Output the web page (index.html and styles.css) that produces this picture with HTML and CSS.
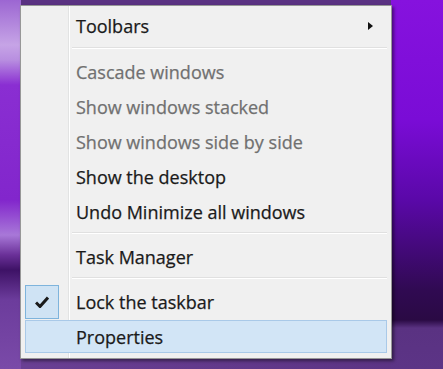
FILE: index.html
```html
<!DOCTYPE html>
<html lang="en">
<head>
  <meta charset="UTF-8">
  <title>Taskbar context menu</title>
  <link rel="stylesheet" href="styles.css">
</head>
<body>

  <!-- Taskbar right-click menu -->
  <div class="menu">
    <div class="item">
      <span class="label">Toolbars</span>
      <span class="arrow"></span>
    </div>

    <div class="sep sep-first"></div>

    <div class="item disabled"><span class="label">Cascade windows</span></div>
    <div class="item disabled"><span class="label">Show windows stacked</span></div>
    <div class="item disabled"><span class="label">Show windows side by side</span></div>
    <div class="item"><span class="label">Show the desktop</span></div>
    <div class="item"><span class="label">Undo Minimize all windows</span></div>

    <div class="sep"></div>

    <div class="item"><span class="label">Task Manager</span></div>

    <div class="sep"></div>

    <div class="item checked">
      <span class="check">
        <svg width="14" height="12" viewBox="0 0 14 12">
          <path d="M1 6.5 L5 10.5 L13 1.5" fill="none" stroke="#1a1a1a" stroke-width="3" stroke-linejoin="miter"/>
        </svg>
      </span>
      <span class="label">Lock the taskbar</span>
    </div>
    <div class="item hover"><span class="label">Properties</span></div>
  </div>

</body>
</html>
```

FILE: styles.css
```css
/* Desktop background */
body {
  margin: 0;
  padding: 5px 0 0 20px;
  height: 369px;
  box-sizing: border-box;
  overflow: hidden;
  font-family: 'Open Sans', 'Noto Sans', sans-serif;
  background:
    linear-gradient(to bottom, #9c66d2 0px, #c6a4e6 45px, #b88ee0 60px, #8a2ed2 85px, #8226cc 200px, #a878d8 235px, #6a3098 255px, #3e1266 270px, #6c3c9c 300px, #7a4aa8 369px) left top / 21px 100% no-repeat,
    linear-gradient(to bottom, #8612de 0px, #7a0cd6 120px, #5a08a8 200px, #300a52 290px, #2a0a44 320px, #5a3282 328px, #5c3486 369px) right top / 52px 100% no-repeat,
    linear-gradient(to right, #6a4094, #5a3282) left bottom / 100% 12px no-repeat,
    #5a3282;
}

/* Menu box */
.menu {
  width: 372px;
  height: 354px;
  box-sizing: border-box;
  padding: 2px 4px 0 4px;
  background:
    linear-gradient(to right, transparent 47px, #e2e3e3 47px, #e2e3e3 48px, #fff 48px, #fff 49px, transparent 49px) left top / 100% 100% no-repeat,
    #f0f0f0;
  border: 1px solid #979797;
  box-shadow: 2px 2px 3px rgba(0, 0, 0, 0.45);
}

.item {
  position: relative;
  display: flex;
  align-items: center;
  height: 35px;
  padding-left: 51px;
  padding-right: 14px;
  box-sizing: border-box;
  font-size: 18px;
  color: #1a1a1a;
  -webkit-text-stroke: 0.25px currentColor;
}
.item.disabled {
  color: #707070;
}
.label {
  flex: 1;
}

/* Submenu arrow */
.arrow {
  width: 0;
  height: 0;
  border-top: 4.5px solid transparent;
  border-bottom: 4.5px solid transparent;
  border-left: 5px solid #111;
}

/* Separators */
.sep {
  height: 10px;
  margin-left: 47px;
  background: linear-gradient(to bottom, transparent 3px, #e0e0e0 3px, #e0e0e0 4px, #fff 4px, #fff 5px, transparent 5px);
}
.sep-first {
  height: 11px;
  background: linear-gradient(to bottom, transparent 4px, #e0e0e0 4px, #e0e0e0 5px, #fff 5px, #fff 6px, transparent 6px);
}

/* Checked item */
.check {
  position: absolute;
  left: 0;
  top: 1px;
  width: 34px;
  height: 34px;
  box-sizing: border-box;
  display: flex;
  align-items: center;
  justify-content: center;
  background: #cfe3f4;
  border: 1px solid #7eb4dc;
}

/* Highlighted item */
.item.hover {
  height: 33px;
  margin-top: 1px;
  background: #d2e5f6;
  border: 1px solid #a9c9e8;
  padding-left: 50px;
}
```
